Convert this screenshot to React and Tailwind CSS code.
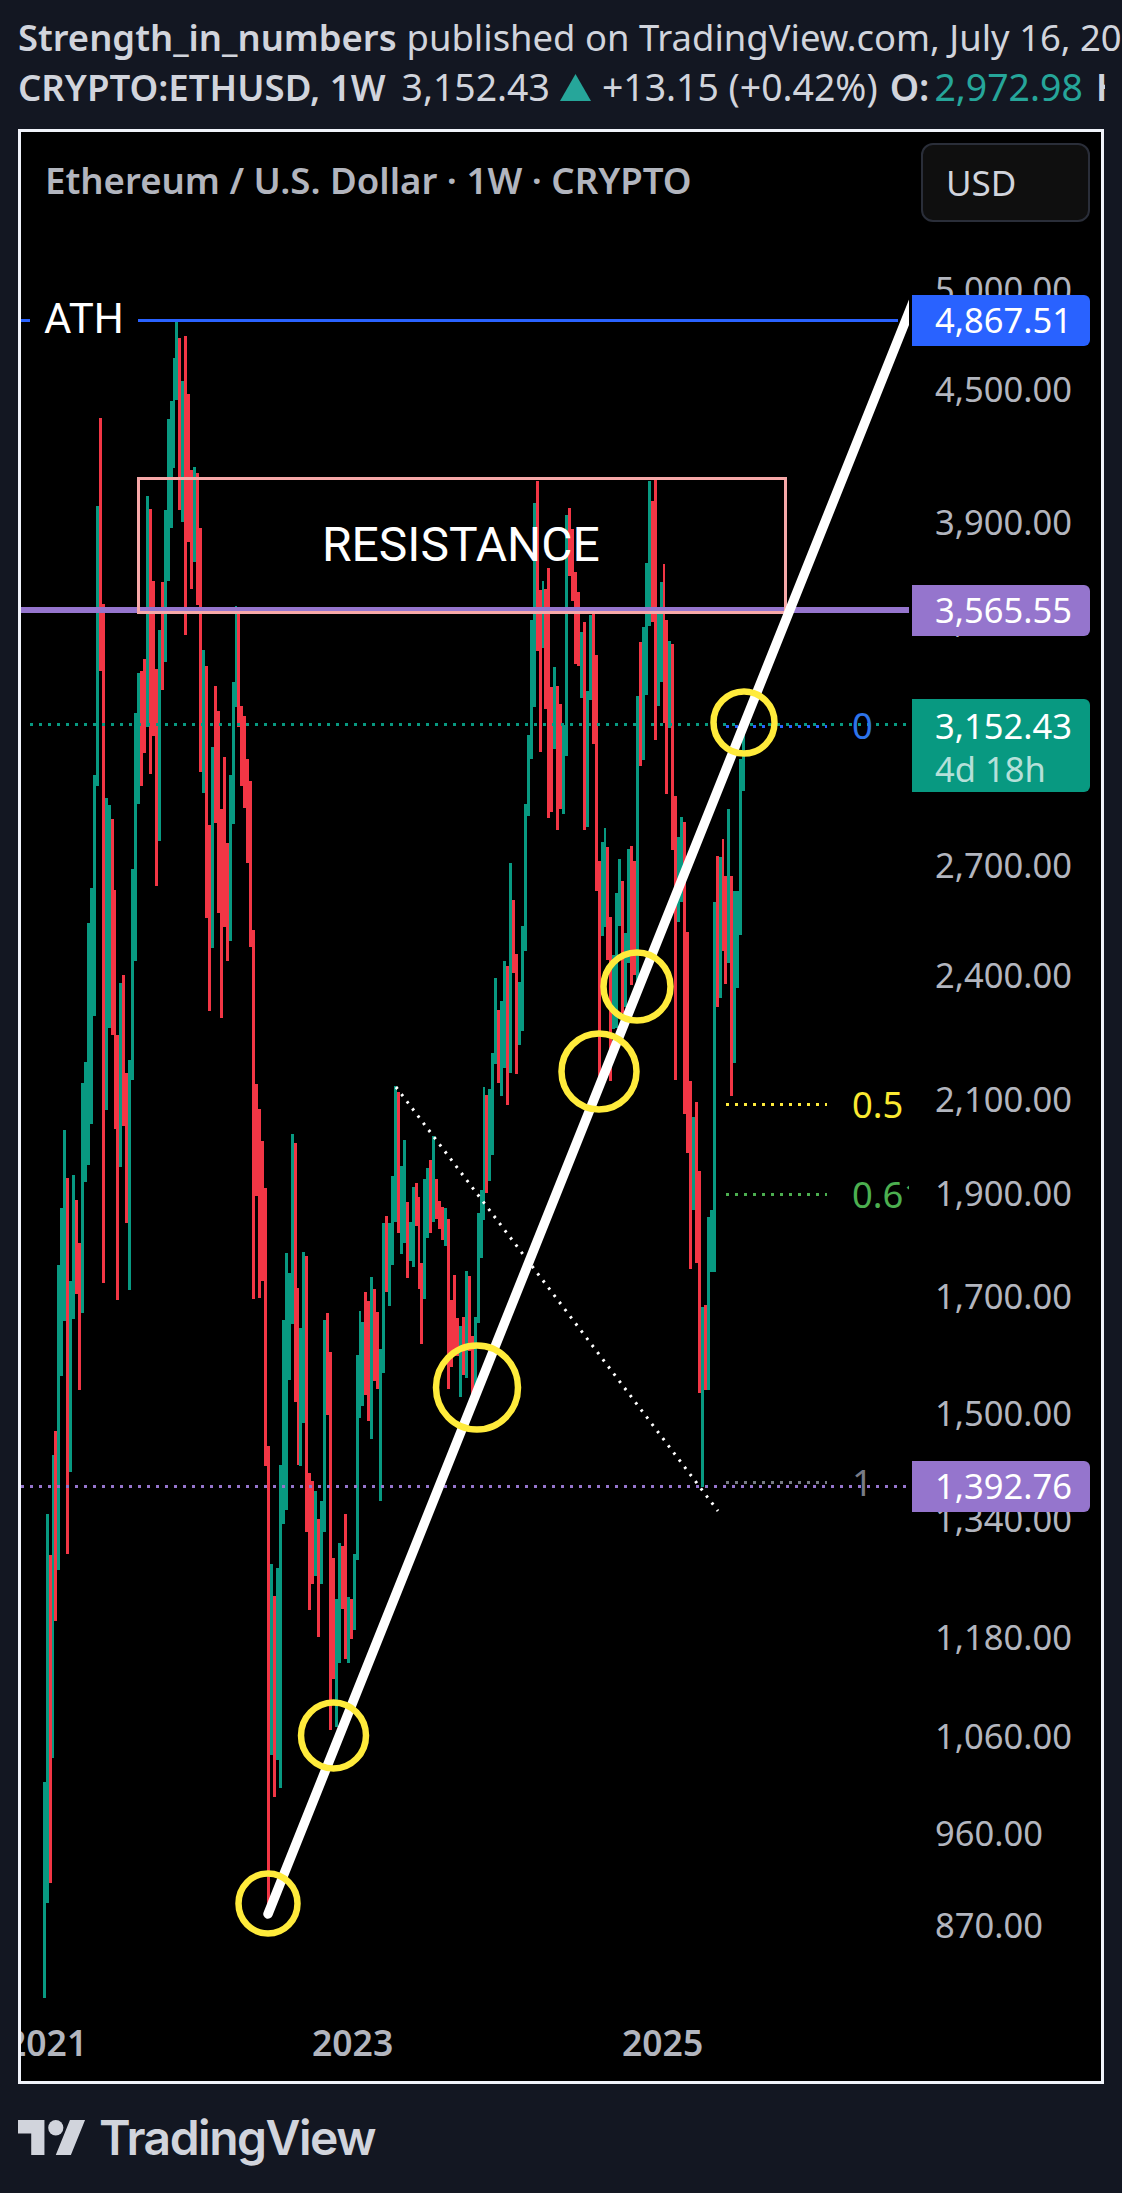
import React from "react";

const G = "#089981";
const R = "#f23645";
const bars = [
[43,1782,1998,G],[46,1514,1903,G],[49,1555,1883,R],[52,1455,1758,G],[54,1431,1621,R],[57,1265,1570,G],[60,1208,1376,G],[63,1130,1321,G],[66,1178,1554,R],[69,1281,1472,G],[72,1175,1319,G],[75,1200,1294,R],[78,1243,1390,R],[81,1083,1313,G],[84,1062,1182,G],[87,923,1165,G],[90,888,1124,G],[93,775,1016,G],[96,506,786,G],[99,418,671,R],[102,604,1283,R],[105,798,1110,G],[108,805,1028,G],[111,819,1035,R],[114,890,1129,R],[116,1035,1300,R],[119,983,1167,G],[122,975,1126,R],[125,1073,1223,R],[128,1060,1290,G],[131,869,1080,G],[134,713,961,G],[137,673,804,G],[140,671,786,R],[143,659,753,R],[146,496,727,G],[149,509,774,R],[152,581,736,R],[155,669,886,R],[158,630,841,G],[161,582,690,R],[164,510,662,G],[167,419,581,G],[170,401,528,G],[173,358,468,G],[175,320,400,G],[178,338,510,R],[181,381,522,G],[184,336,635,R],[187,394,542,R],[190,470,589,R],[193,467,562,G],[196,473,605,R],[199,528,772,R],[202,650,793,G],[205,666,918,R],[208,825,1011,R],[211,747,948,G],[214,686,823,R],[217,711,913,R],[220,809,1018,R],[223,757,927,R],[226,843,961,R],[229,775,941,G],[232,682,824,G],[235,606,707,G],[237,610,727,R],[240,706,786,R],[243,716,808,R],[246,759,863,R],[249,781,947,R],[252,930,1299,R],[255,1084,1196,R],[258,1109,1298,R],[261,1141,1281,R],[264,1188,1466,R],[267,1446,1917,R],[270,1564,1755,G],[273,1596,1797,R],[276,1568,1760,G],[279,1465,1788,G],[282,1320,1524,G],[285,1253,1510,G],[288,1273,1380,G],[291,1134,1324,G],[294,1143,1402,R],[297,1288,1465,R],[299,1328,1466,G],[302,1252,1423,G],[305,1256,1532,R],[308,1473,1610,R],[311,1481,1584,R],[314,1491,1576,G],[317,1519,1637,R],[320,1501,1584,G],[323,1320,1532,G],[326,1313,1415,R],[329,1352,1730,R],[332,1558,1679,R],[335,1599,1727,G],[338,1543,1663,G],[341,1546,1609,R],[344,1514,1659,R],[347,1597,1663,G],[350,1599,1639,R],[353,1554,1630,G],[356,1355,1560,G],[359,1311,1418,G],[361,1322,1406,G],[364,1292,1395,R],[367,1301,1421,R],[370,1277,1439,G],[373,1289,1381,R],[376,1312,1389,R],[379,1349,1501,G],[382,1223,1373,G],[385,1216,1292,R],[388,1223,1306,G],[391,1176,1265,G],[394,1086,1222,G],[397,1092,1233,R],[400,1166,1254,G],[403,1140,1243,G],[406,1202,1278,R],[409,1222,1261,G],[412,1187,1267,G],[415,1183,1226,R],[418,1197,1289,R],[420,1263,1344,R],[423,1179,1299,G],[426,1168,1238,G],[429,1160,1233,R],[432,1136,1222,G],[435,1179,1219,R],[438,1201,1229,R],[441,1207,1240,R],[444,1208,1246,G],[447,1219,1389,R],[450,1300,1367,R],[453,1275,1356,R],[456,1318,1356,R],[459,1326,1397,G],[462,1317,1375,R],[465,1271,1378,G],[468,1276,1351,R],[471,1336,1403,R],[474,1317,1390,G],[477,1213,1323,G],[480,1190,1258,G],[483,1087,1220,G],[485,1095,1193,R],[488,1089,1181,G],[491,1053,1155,G],[494,978,1064,G],[497,1010,1083,R],[500,1001,1096,G],[503,961,1068,G],[506,966,1105,R],[509,863,1073,G],[512,900,973,R],[515,954,1074,R],[518,982,1045,G],[521,926,1031,G],[524,804,951,G],[527,735,816,G],[530,620,759,G],[533,503,707,G],[536,481,651,R],
[539,590,752,R],[542,581,648,G],[544,589,709,R],[547,568,818,R],[550,687,812,R],[553,667,749,G],[556,686,830,R],[559,704,809,R],[562,725,814,G],[565,515,756,G],[568,508,576,R],[571,529,601,R],[574,572,664,R],[577,592,666,R],[580,632,698,G],[583,622,830,R],[586,691,827,G],[589,615,700,G],[592,614,744,R],[595,655,891,R],[598,861,1091,R],[601,842,936,G],[604,828,927,G],[606,847,960,R],[609,917,1081,R],[612,955,1029,G],[615,893,1028,G],[618,859,926,G],[621,881,1013,R],[624,933,1007,G],[627,849,963,G],[630,846,985,R],[633,861,975,R],[636,696,994,G],[639,642,766,R],[642,627,760,G],[645,563,695,G],[648,481,626,G],[651,501,622,R],[654,480,740,R],[657,614,706,G],[660,582,682,G],[663,564,723,R],[665,620,794,R],[668,641,728,G],[671,644,850,R],[674,796,1080,R],[677,837,922,G],[680,817,902,G],[683,822,1114,R],[686,932,1153,R],[689,1081,1269,R],[692,1117,1210,G],[695,1102,1263,R],[698,1171,1393,R],[701,1307,1487,G],[704,1305,1390,R],[707,1217,1390,G],[710,1210,1272,G],[713,902,1272,G],[716,856,1007,R],[719,857,998,G],[722,839,951,R],[724,876,984,R],[727,809,963,G],[730,876,1096,R],[733,891,1063,G],[736,891,988,G],[739,759,935,G],[742,724,791,G],
];

const prices = [
  ["5,000.00", 289],["4,500.00", 389],["3,900.00", 522],["3,300.00", 620],["2,700.00", 865],
  ["2,400.00", 975],["2,100.00", 1099],["1,900.00", 1193],["1,700.00", 1296],["1,500.00", 1413],
  ["1,340.00", 1519],["1,180.00", 1637],["1,060.00", 1736],["960.00", 1833],["870.00", 1925],
];

const circles = [
  [268, 1903.5, 29.5, 30],
  [333.5, 1735.5, 32.5, 33],
  [477, 1387.5, 41, 42],
  [599, 1071.5, 37.5, 38],
  [637, 986.5, 33.5, 34],
  [744, 722.5, 30.5, 31],
];

function At({ x, y, className, children }) {
  return (
    <div className={"absolute -translate-y-1/2 whitespace-nowrap leading-none " + className} style={{ left: x - 21, top: y - 132 }}>
      {children}
    </div>
  );
}

function PriceTag({ y, bottom, bg, text }) {
  return (
    <div
      className="absolute left-[891px] w-[178px] rounded-r-[6px] pl-[23px] text-white text-[34.5px] leading-none flex items-center"
      style={{ top: y - 132, height: bottom - y, background: bg }}
    >
      {text}
    </div>
  );
}

function Chart() {
  return (
    <svg className="absolute inset-0" width="1080" height="1949" viewBox="21 132 1080 1949">
      <defs>
        <clipPath id="pane">
          <rect x="21" y="132" width="888" height="1949" />
        </clipPath>
      </defs>
      {bars.map((b, i) => {
        const next = bars[i + 1];
        const w = next ? next[0] - b[0] : 3;
        return <rect key={i} x={b[0]} y={b[1]} width={w} height={b[2] - b[1]} fill={b[3]} />;
      })}
      <line x1="30" x2="909" y1="724.5" y2="724.5" stroke="#089981" strokeWidth="3" strokeDasharray="3 6" />
      <line x1="21" x2="909" y1="1486.5" y2="1486.5" stroke="#9575cd" strokeWidth="3" strokeDasharray="3 6" />
      <line x1="21" x2="30" y1="320.5" y2="320.5" stroke="#2962ff" strokeWidth="3" />
      <line x1="138" x2="898" y1="320.5" y2="320.5" stroke="#2962ff" strokeWidth="3" />
      <line x1="726" x2="827" y1="726.5" y2="726.5" stroke="#2962ff" strokeWidth="3" strokeDasharray="3 6" />
      <line x1="726" x2="827" y1="1104.5" y2="1104.5" stroke="#ffeb3b" strokeWidth="3" strokeDasharray="3 6" />
      <line x1="726" x2="827" y1="1194.5" y2="1194.5" stroke="#4caf50" strokeWidth="3" strokeDasharray="3 6" />
      <line x1="726" x2="827" y1="1482.5" y2="1482.5" stroke="#787b86" strokeWidth="3" strokeDasharray="3 6" />
      <rect x="21" y="607" width="888" height="6" fill="#9575cd" />
      <rect x="138.5" y="478.5" width="647" height="134" fill="none" stroke="#f7a8a8" strokeWidth="3" />
      <line x1="396" y1="1087" x2="718" y2="1511" stroke="#ffffff" strokeWidth="3" strokeDasharray="2.5 6.5" />
      <g clipPath="url(#pane)">
        <line x1="268" y1="1914" x2="925.5" y2="271" stroke="#ffffff" strokeWidth="9.5" strokeLinecap="round" />
      </g>
      {circles.map((c, i) => (
        <ellipse key={i} cx={c[0]} cy={c[1]} rx={c[2]} ry={c[3]} fill="none" stroke="#ffeb3b" strokeWidth="6.5" />
      ))}
    </svg>
  );
}

export default function App() {
  return (
    <div className="w-[1122px] h-[2193px] bg-[#131722] overflow-hidden font-['Noto_Sans',sans-serif] text-[#d1d4dc]">
      <div className="pt-[12px] pl-[18px]">
        <div className="h-[50px] flex items-center whitespace-nowrap text-[36.4px] leading-none w-[1104px] overflow-hidden">
          <span className="font-semibold">Strength_in_numbers</span>
          <span className="ml-[10px]">published on TradingView.com, July 16, 2025 20:26 UTC</span>
        </div>
        <div className="h-[50px] flex items-center whitespace-nowrap text-[37.4px] leading-none w-[1087px] overflow-hidden">
          <span className="font-semibold text-[36.6px]">CRYPTO:ETHUSD, 1W</span>
          <span className="ml-[16px]">3,152.43</span>
          <svg className="ml-[10px] shrink-0" width="31" height="27" viewBox="0 0 31 27">
            <polygon points="15.5,0 31,27 0,27" fill="#26a69a" />
          </svg>
          <span className="ml-[11px]">+13.15 (+0.42%)</span>
          <span className="ml-[12px] font-semibold">O:</span>
          <span className="ml-[5px] text-[#26a69a]">2,972.98</span>
          <span className="ml-[13px] font-semibold">H:</span>
        </div>
      </div>

      <div className="relative mt-[17px] ml-[18px] w-[1086px] h-[1955px] border-[3px] border-[#f0f3fa] bg-black overflow-hidden flex flex-col justify-between">
        <Chart />

        <div className="relative flex items-center justify-between pt-[11px] pl-[24px] pr-[11px]">
          <span className="pb-[5px] text-[36.6px] leading-none font-semibold text-[#b2b5be] whitespace-nowrap">
            Ethereum / U.S. Dollar · 1W · CRYPTO
          </span>
          <div className="w-[169px] h-[79px] rounded-[12px] border-2 border-[#2a2e39] bg-[#0f0f0f] flex items-center pl-[23px] text-[35px] leading-none text-[#d1d4dc]">
            USD
          </div>
        </div>

        <At x={44} y={319} className="text-[42px] text-white font-['Roboto',sans-serif]">ATH</At>
        <At x={322} y={545} className="text-[48px] text-white font-['Roboto',sans-serif]">RESISTANCE</At>

        {prices.map(([t, y]) => (
          <At key={t} x={935} y={y} className="text-[34.5px] text-[#b2b5be]">{t}</At>
        ))}

        <At x={852} y={725} className="text-[36.4px] text-[#2e74ea]">0</At>
        <At x={852} y={1104} className="text-[36.4px] text-[#fbe931]">0.5</At>
        <At x={852} y={1194} className="w-[57px] overflow-hidden text-[36.4px] text-[#4caf50]">0.618</At>
        <At x={852} y={1482} className="text-[36.4px] text-[#787b86]">1</At>

        <PriceTag y={295} bottom={346} bg="#2962ff" text="4,867.51" />
        <PriceTag y={585} bottom={636} bg="#9575cd" text="3,565.55" />
        <PriceTag y={1461} bottom={1512} bg="#9575cd" text="1,392.76" />

        <div className="absolute left-[891px] top-[567px] w-[178px] h-[93px] rounded-r-[6px] bg-[#089981] pl-[23px] pt-[5px] text-[34.5px] leading-[43px]">
          <div className="text-white">3,152.43</div>
          <div className="text-[#b5e0d9]">4d 18h</div>
        </div>

        <div className="relative flex -ml-[15px] pb-[21px] text-[35.5px] leading-none font-semibold text-[#b2b5be]">
          <span className="w-[306px] shrink-0">2021</span>
          <span className="w-[310px] shrink-0">2023</span>
          <span className="w-[310px] shrink-0">2025</span>
        </div>
      </div>

      <div className="mt-[36px] ml-[18px] flex items-start gap-[13px]">
        <svg width="68" height="35" viewBox="0 4 36 18" preserveAspectRatio="none" className="shrink-0">
          <path d="M14 22H7V11H0V4h14v18zM28 22h-8l7.5-18h8L28 22z" fill="#d1d4dc" />
          <circle cx="20" cy="8" r="4" fill="#d1d4dc" />
        </svg>
        <span className="font-['Inter',sans-serif] font-semibold text-[48px] leading-[35px] tracking-[-1.5px] text-[#d1d4dc]">TradingView</span>
      </div>
    </div>
  );
}
